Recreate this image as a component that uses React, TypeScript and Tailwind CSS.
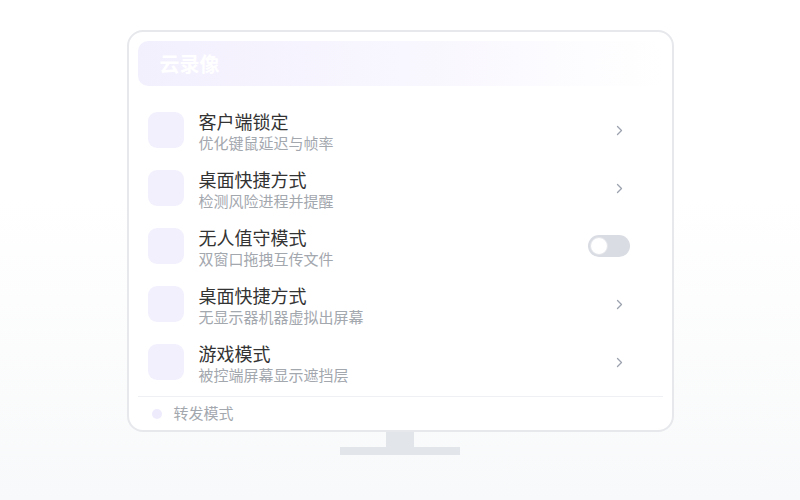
import React from "react";

interface SettingItem {
    title: string
    desc: string
    toggle?: boolean
}

const items: SettingItem[] = [
    { title: "客户端锁定", desc: "优化键鼠延迟与帧率" },
    { title: "桌面快捷方式", desc: "检测风险进程并提醒" },
    { title: "无人值守模式", desc: "双窗口拖拽互传文件", toggle: true },
    { title: "桌面快捷方式", desc: "无显示器机器虚拟出屏幕" },
    { title: "游戏模式", desc: "被控端屏幕显示遮挡层" },
];

const Chevron = () => (
    <svg width="7" height="11" viewBox="0 0 7 11" fill="none">
        <path d="M1.5 1.5 L5.5 5.5 L1.5 9.5" stroke="#9ca3af" strokeWidth="1.3" strokeLinecap="round" strokeLinejoin="round" />
    </svg>
)

const Toggle = () => (
    <div className="w-[42px] h-[22px] rounded-full bg-[#d9dce3] p-[2px] flex items-center">
        <div className="w-[18px] h-[18px] rounded-full bg-white border border-[#e3e5ea]" />
    </div>
)

const Row: React.FC<{ item: SettingItem }> = ({ item }) => {
    return (
        <div className="h-[58px] shrink-0 flex items-center pl-[10px] pr-[33px]">
            <div className="w-[36px] h-[36px] rounded-[9px] bg-[#f3f0fe] shrink-0" />
            <div className="ml-[15px] flex-1 flex flex-col pt-[2px]">
                <div className="text-[18px] leading-[24px] text-[#333333]">{item.title}</div>
                <div className="text-[15px] leading-[20px] text-[#a3a7ae]">{item.desc}</div>
            </div>
            {item.toggle ? <Toggle /> : <div className="mr-[7px] flex items-center"><Chevron /></div>}
        </div>
    )
}

export default function App() {
    return (
        <div
            className="w-[800px] h-[500px] bg-gradient-to-b from-white from-40% to-[#f8f9fa] flex flex-col items-center pt-[30px]"
            style={{ fontFamily: '"Noto Sans CJK SC", "Noto Sans", sans-serif' }}
        >
            {/* screen */}
            <div className="w-[547px] h-[402px] shrink-0 bg-white border-2 border-[#e6e8ec] rounded-[16px] px-[9px] pt-[9px] flex flex-col">
                <div className="h-[45px] shrink-0 rounded-[10px] bg-gradient-to-r from-[#f3f0fe] via-[#f8f6fe] to-white flex items-center justify-between pl-[22px] pr-[30px]">
                    <span className="text-[20px] font-bold text-white">云录像</span>
                    <span className="text-[13px] text-white opacity-60">云录像</span>
                </div>
                <div className="mt-[15px] shrink-0 flex flex-col">
                    {items.map((item, i) => (
                        <Row key={i} item={item} />
                    ))}
                </div>
                <div className="mt-[5px] shrink-0 border-t border-[#eef0f3] flex items-center h-[34px] pl-[14px]">
                    <div className="w-[10px] h-[10px] rounded-full bg-[#eeebfd]" />
                    <span className="ml-[12px] text-[15px] text-[#a3a7ae]">转发模式</span>
                </div>
            </div>
            {/* stand */}
            <div className="w-[28px] h-[15px] bg-[#e2e5ea]" />
            <div className="w-[120px] h-[8px] bg-[#e2e5ea]" />
        </div>
    )
}
